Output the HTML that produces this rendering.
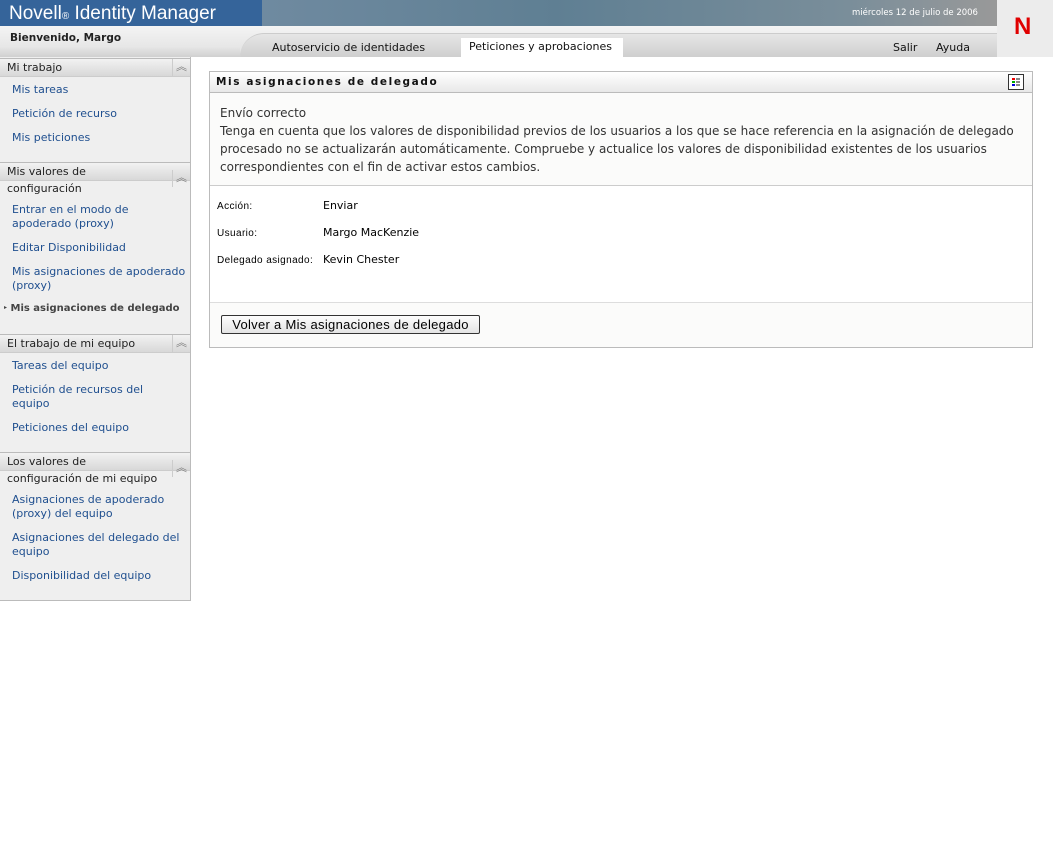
<!DOCTYPE html>
<html><head><meta charset="utf-8"><style>
*{margin:0;padding:0;box-sizing:border-box}
body{width:1053px;height:853px;background:#fff;font-family:"DejaVu Sans","Liberation Sans",sans-serif;font-size:11px;color:#000;position:relative;overflow:hidden}
.a{position:absolute;white-space:nowrap}
.lnk{color:#1f4f8f;font-size:11px}
.sh{position:absolute;left:0;width:190px;background:linear-gradient(#f2f2f2,#d8d8d8);border-top:1px solid #bbb;border-bottom:1px solid #ccc;font-size:11px;color:#222}
.chev{position:absolute;right:0;top:0;width:18px;height:17px;border-left:1px solid #ccc;text-align:center;color:#777;font-size:11px;line-height:16px}
.lb{font-family:"Liberation Sans",sans-serif;font-size:10px;letter-spacing:.4px}
</style></head><body>
<div class="a" style="left:0;top:0;width:262px;height:27px;background:#35649a"></div>
<div class="a" style="left:9px;top:3px;color:#fff;font-size:19px;font-family:'Liberation Sans',sans-serif">Novell<span style="font-size:10px">®</span> Identity Manager</div>
<div class="a" style="left:262px;top:0;width:735px;height:26px;background:linear-gradient(90deg,#6f8aa0,#5f7f93 40%,#7a8e9a 80%,#999 100%)"></div>
<div class="a" style="left:852px;top:8px;color:#fff;font-size:8.5px">miércoles 12 de julio de 2006</div>
<div class="a" style="left:997px;top:0;width:56px;height:57px;background:#ececec"></div>
<div class="a" style="left:1014px;top:13px;color:#e00000;font-size:24px;font-weight:bold;font-family:'Liberation Sans',sans-serif">N</div>
<div class="a" style="left:0;top:26px;width:997px;height:31px;background:linear-gradient(#f4f4f4,#e0e0e0)"></div>
<div class="a" style="left:240px;top:33px;width:757px;height:24px;background:linear-gradient(#e6e6e6,#cfcfcf);border-radius:30px 0 0 0;border-top:1px solid #ccc"></div>
<div class="a" style="left:0;top:46px;width:240px;height:11px;background:linear-gradient(#e8e8e8,#d0d0d0)"></div>
<div class="a" style="left:10px;top:32px;font-weight:bold;color:#222;font-size:10.5px">Bienvenido, Margo</div>
<div class="a" style="left:272px;top:41px;color:#111">Autoservicio de identidades</div>
<div class="a" style="left:461px;top:38px;width:162px;height:19px;background:#fff"></div>
<div class="a" style="left:469px;top:40px;color:#111">Peticiones y aprobaciones</div>
<div class="a" style="left:893px;top:41px;color:#111">Salir</div>
<div class="a" style="left:936px;top:41px;color:#111">Ayuda</div>
<div class="a" style="left:0;top:57px;width:191px;height:544px;background:#efefef;border-right:1px solid #bbb;border-bottom:1px solid #bbb"></div>
<div class="sh" style="top:58px;height:19px"><span style="position:absolute;left:7px;top:2px">Mi trabajo</span><div class="chev">︽</div></div>
<div class="a lnk" style="left:12px;top:83px">Mis tareas</div>
<div class="a lnk" style="left:12px;top:107px">Petición de recurso</div>
<div class="a lnk" style="left:12px;top:131px">Mis peticiones</div>
<div class="sh" style="top:162px;height:19px"><span style="position:absolute;left:7px;top:2px">Mis valores de</span><div class="chev" style="top:7px">︽</div></div>
<div class="a" style="left:7px;top:182px;color:#222">configuración</div>
<div class="a lnk" style="left:12px;top:203px;line-height:14px">Entrar en el modo de<br>apoderado (proxy)</div>
<div class="a lnk" style="left:12px;top:241px">Editar Disponibilidad</div>
<div class="a lnk" style="left:12px;top:265px;line-height:14px">Mis asignaciones de apoderado<br>(proxy)</div>
<div class="a" style="left:4px;top:303px;font-weight:bold;color:#444;font-size:10px"><span style="font-size:6px;vertical-align:2px">▸</span> Mis asignaciones de delegado</div>
<div class="sh" style="top:334px;height:19px"><span style="position:absolute;left:7px;top:2px">El trabajo de mi equipo</span><div class="chev">︽</div></div>
<div class="a lnk" style="left:12px;top:359px">Tareas del equipo</div>
<div class="a lnk" style="left:12px;top:383px;line-height:14px">Petición de recursos del<br>equipo</div>
<div class="a lnk" style="left:12px;top:421px">Peticiones del equipo</div>
<div class="sh" style="top:452px;height:19px"><span style="position:absolute;left:7px;top:2px">Los valores de</span><div class="chev" style="top:7px">︽</div></div>
<div class="a" style="left:7px;top:472px;color:#222">configuración de mi equipo</div>
<div class="a lnk" style="left:12px;top:493px;line-height:14px">Asignaciones de apoderado<br>(proxy) del equipo</div>
<div class="a lnk" style="left:12px;top:531px;line-height:14px">Asignaciones del delegado del<br>equipo</div>
<div class="a lnk" style="left:12px;top:569px">Disponibilidad del equipo</div>
<div class="a" style="left:209px;top:71px;width:824px;height:277px;border:1px solid #bbb;background:#fbfbfa"></div>
<div class="a" style="left:210px;top:72px;width:822px;height:21px;background:linear-gradient(#fff,#e8e8e8);border-bottom:1px solid #bbb"></div>
<div class="a" style="left:216px;top:76px;font-weight:bold;letter-spacing:1.6px;color:#111;font-size:10.5px">Mis asignaciones de delegado</div>
<div class="a" style="left:1008px;top:74px;width:16px;height:16px;border:1px solid #333;background:#fff">
<div style="position:absolute;left:3px;top:3px;width:3px;height:2px;background:#e00"></div><div style="position:absolute;left:7px;top:3px;width:4px;height:2px;background:#888"></div>
<div style="position:absolute;left:3px;top:6px;width:3px;height:2px;background:#0a0"></div><div style="position:absolute;left:7px;top:6px;width:4px;height:2px;background:#888"></div>
<div style="position:absolute;left:3px;top:9px;width:3px;height:2px;background:#00d"></div><div style="position:absolute;left:7px;top:9px;width:4px;height:2px;background:#888"></div></div>
<div class="a" style="left:220px;top:104px;color:#333;font-size:12px;line-height:18px">Envío correcto<br>Tenga en cuenta que los valores de disponibilidad previos de los usuarios a los que se hace referencia en la asignación de delegado<br>procesado no se actualizarán automáticamente. Compruebe y actualice los valores de disponibilidad existentes de los usuarios<br>correspondientes con el fin de activar estos cambios.</div>
<div class="a" style="left:210px;top:185px;width:822px;height:1px;background:#ccc"></div>
<div class="a" style="left:210px;top:186px;width:822px;height:116px;background:#fff"></div>
<div class="a lb" style="left:217px;top:201px">Acción:</div>
<div class="a" style="left:323px;top:199px">Enviar</div>
<div class="a lb" style="left:217px;top:228px">Usuario:</div>
<div class="a" style="left:323px;top:226px">Margo MacKenzie</div>
<div class="a lb" style="left:217px;top:255px">Delegado asignado:</div>
<div class="a" style="left:323px;top:253px">Kevin Chester</div>
<div class="a" style="left:210px;top:302px;width:822px;height:1px;background:#ddd"></div>
<div class="a" style="left:221px;top:315px;width:259px;height:19px;border:1px solid #333;border-radius:2px;background:linear-gradient(#fdfdfd,#e4e4e4);font-size:13px;text-align:center;line-height:17px;color:#000;font-family:'Liberation Sans',sans-serif;letter-spacing:.3px">Volver a Mis asignaciones de delegado</div>
</body></html>
